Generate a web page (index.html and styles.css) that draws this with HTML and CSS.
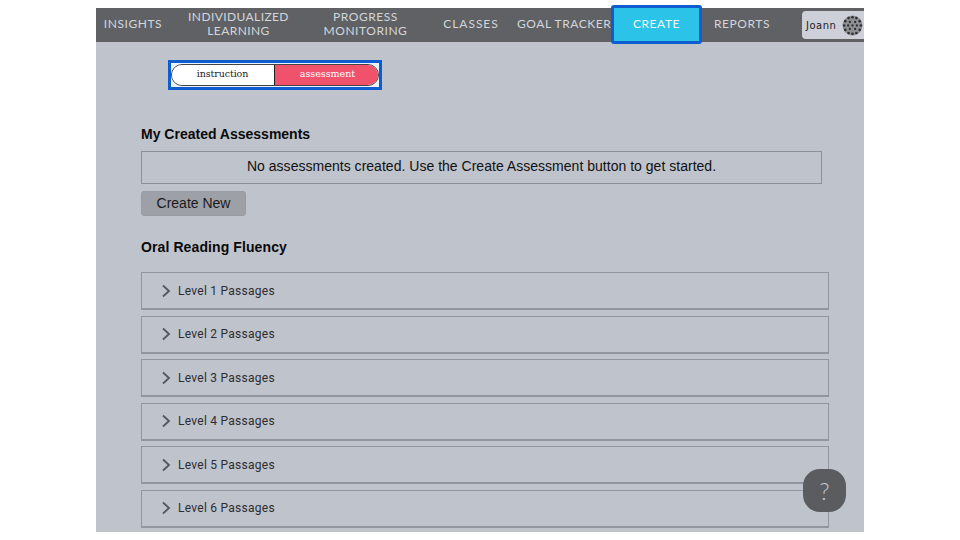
FILE: index.html
```html
<!DOCTYPE html>
<html lang="en">
<head>
<meta charset="utf-8">
<title>Create</title>
<link rel="stylesheet" href="styles.css">
</head>
<body>
<div class="app">
  <nav class="nav">
    <a class="item w-insights">INSIGHTS</a>
    <a class="item w-ind">INDIVIDUALIZED<br>LEARNING</a>
    <a class="item w-prog">PROGRESS<br>MONITORING</a>
    <a class="item w-classes">CLASSES</a>
    <a class="item w-goal">GOAL TRACKER</a>
    <a class="item create">CREATE</a>
    <a class="item w-reports">REPORTS</a>
    <div class="user">
      <span class="user-name">Joann</span>
      <svg class="avatar" viewBox="0 0 24 24" width="21" height="21">
        <circle cx="12" cy="12" r="11.500" fill="#8f9094"/>
        <g fill="#2f3033">
          <circle cx="12" cy="2.500" r="1.500"/><circle cx="7.500" cy="3.500" r="1.500"/><circle cx="16.500" cy="3.500" r="1.500"/>
          <circle cx="3.800" cy="7" r="1.500"/><circle cx="20.200" cy="7" r="1.500"/><circle cx="2.500" cy="12" r="1.500"/><circle cx="21.500" cy="12" r="1.500"/>
          <circle cx="3.800" cy="17" r="1.500"/><circle cx="20.200" cy="17" r="1.500"/><circle cx="7.500" cy="20.500" r="1.500"/><circle cx="16.500" cy="20.500" r="1.500"/><circle cx="12" cy="21.500" r="1.500"/>
          <circle cx="9" cy="8" r="1.300"/><circle cx="15" cy="8" r="1.300"/><circle cx="7" cy="12" r="1.300"/><circle cx="17" cy="12" r="1.300"/>
          <circle cx="9" cy="16" r="1.300"/><circle cx="15" cy="16" r="1.300"/><circle cx="12" cy="12" r="1.300"/>
        </g>
      </svg>
    </div>
  </nav>
  <main class="main">
    <div class="toggle-frame">
      <div class="toggle">
        <span class="seg seg-off">instruction</span>
        <span class="seg seg-on">assessment</span>
      </div>
    </div>
    <h2 class="title title-first">My Created Assessments</h2>
    <div class="notice">No assessments created. Use the Create Assessment button to get started.</div>
    <button class="btn">Create New</button>
    <h2 class="title title-second">Oral Reading Fluency</h2>
    <ul class="levels">
      <li class="level"><svg class="chev" viewBox="0 0 10 14" width="10" height="14"><path d="M2 1.500 8 7l-6 5.500"/></svg>Level 1 Passages</li>
      <li class="level"><svg class="chev" viewBox="0 0 10 14" width="10" height="14"><path d="M2 1.500 8 7l-6 5.500"/></svg>Level 2 Passages</li>
      <li class="level"><svg class="chev" viewBox="0 0 10 14" width="10" height="14"><path d="M2 1.500 8 7l-6 5.500"/></svg>Level 3 Passages</li>
      <li class="level"><svg class="chev" viewBox="0 0 10 14" width="10" height="14"><path d="M2 1.500 8 7l-6 5.500"/></svg>Level 4 Passages</li>
      <li class="level"><svg class="chev" viewBox="0 0 10 14" width="10" height="14"><path d="M2 1.500 8 7l-6 5.500"/></svg>Level 5 Passages</li>
      <li class="level"><svg class="chev" viewBox="0 0 10 14" width="10" height="14"><path d="M2 1.500 8 7l-6 5.500"/></svg>Level 6 Passages</li>
    </ul>
  </main>
  <div class="help">?</div>
</div>
</body>
</html>
```
FILE: styles.css
```css
* { box-sizing: border-box; }
html, body { margin: 0; padding: 0; background: #fff; }
body { height: 540px; overflow: hidden; }
.app {
  position: relative;
  width: 768px;
  height: 524px;
  margin: 8px auto 0;
  background: #bfc3cc;
  font-family: "Liberation Sans", Arial, sans-serif;
}
.nav {
  display: flex;
  align-items: center;
  height: 34px;
  background: #5f6165;
}
.item {
  display: block;
  flex: none;
  text-align: center;
  white-space: nowrap;
  font-family: Lato, sans-serif;
  font-size: 12px;
  line-height: 14px;
  letter-spacing: 0.55px;
  color: #d4d6da;
  padding-bottom: 2px;
}
.w-insights { width: 74px; }
.w-ind { width: 105px; margin-left: 16px; letter-spacing: 0.4px; }
.w-prog { width: 113px; margin-left: 18px; }
.w-classes { width: 66px; margin-left: 16px; letter-spacing: 0.95px; }
.w-goal { width: 94px; margin-left: 13px; }
.w-reports { width: 80px; }
.create {
  width: 91px;
  height: 39px;
  margin-top: -1px;
  padding: 0;
  line-height: 31px;
  background: #2cc3e8;
  border: 3px solid #0d5cd0;
  border-radius: 3px;
  color: #eef8fb;
}
.user {
  flex: none;
  display: flex;
  align-items: center;
  gap: 6px;
  width: 62px;
  height: 28px;
  margin-left: 20px;
  padding-left: 4px;
  background: #cdd0d8;
  border-radius: 4px 0 0 4px;
}
.user-name { font-family: "DejaVu Sans", sans-serif; font-size: 10px; letter-spacing: 0.5px; color: #1f2023; }
.avatar { flex: none; }
.main { height: 490px; padding: 18px 0 0 45px; overflow: hidden; }
.toggle-frame {
  display: flex;
  align-items: center;
  width: 214px;
  height: 30px;
  margin-left: 27px;
  border: 3px solid #0d5cd0;
  background: #eaf3fb;
}
.toggle {
  display: flex;
  width: 208px;
  height: 22px;
  border: 1px solid #444;
  border-radius: 11px;
  overflow: hidden;
}
.seg {
  text-align: center;
  font-family: "DejaVu Serif", serif;
  font-size: 9.500px;
  line-height: 18px;
}
.seg-off { flex: 0 0 103px; padding-right: 1px; letter-spacing: -0.1px; background: #fff; color: #222; border-right: 1px solid #222; }
.seg-on { flex: 1; padding-left: 2px; background: #f0526c; color: #fff; }
.title {
  margin: 0;
  font-size: 14px;
  line-height: 16px;
  font-weight: 700;
  color: #0a0a0a;
}
.title-first { margin-top: 36px; }
.title-second { margin-top: 23px; letter-spacing: 0.1px; }
.notice {
  width: 681px;
  height: 33px;
  margin-top: 9px;
  border: 1px solid #8d9096;
  text-align: center;
  font-size: 14px;
  line-height: 29px;
  letter-spacing: 0.02px;
  color: #111;
}
.btn {
  display: block;
  width: 105px;
  height: 25px;
  margin-top: 7px;
  padding: 0 0 2px;
  border: 1px solid #989ba1;
  border-radius: 3px;
  background: #9da0a7;
  font-family: "Liberation Sans", Arial, sans-serif;
  font-size: 14px;
  color: #1a1a1a;
}
.levels {
  list-style: none;
  margin: 17px 0 0;
  padding: 0;
  display: flex;
  flex-direction: column;
  gap: 5.500px;
}
.level {
  flex: none;
  display: flex;
  align-items: center;
  gap: 7px;
  width: 688px;
  height: 38px;
  padding-left: 19px;
  border: 1px solid #92959c;
  border-bottom-width: 2px;
  font-family: Roboto, sans-serif;
  font-size: 12px;
  letter-spacing: 0.26px;
  color: #2c2d30;
}
.chev { flex: none; fill: none; stroke: #55575b; stroke-width: 1.800; }
.help {
  position: absolute;
  left: 707px;
  top: 461px;
  width: 43px;
  height: 43px;
  border-radius: 17px;
  background: #5b5c60;
  color: #c6c8cc;
  text-align: center;
  font-family: Lato, sans-serif;
  font-size: 24px;
  font-weight: 300;
  line-height: 43px;
}
```
